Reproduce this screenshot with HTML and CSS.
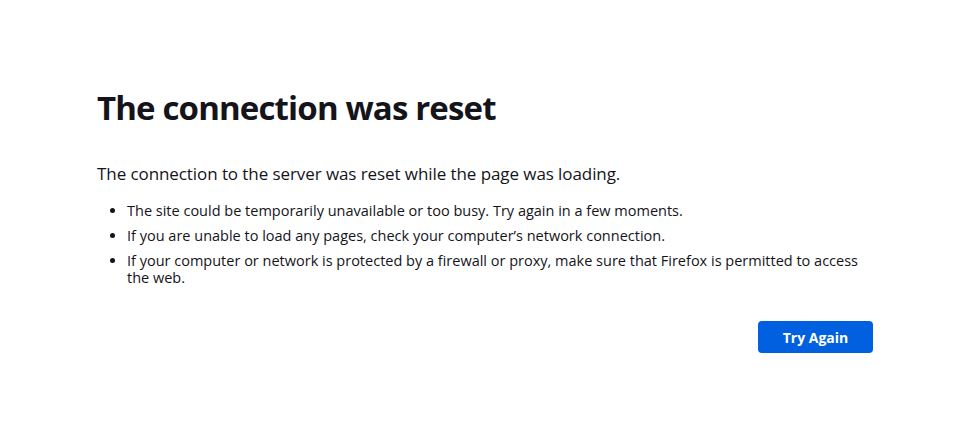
FILE: index.html
```html
<!DOCTYPE html>
<html lang="en">
<head>
<meta charset="utf-8">
<title>Problem loading page</title>
<link rel="stylesheet" href="styles.css">
</head>
<body>
<main class="container">
  <h1 class="title">The connection was reset</h1>
  <p class="desc">The connection to the server was reset while the page was loading.</p>
  <ul class="tips">
    <li>The site could be temporarily unavailable or too busy. Try again in a few moments.</li>
    <li>If you are unable to load any pages, check your computer’s network connection.</li>
    <li>If your computer or network is protected by a firewall or proxy, make sure that Firefox is permitted to access the web.</li>
  </ul>
  <div class="actions">
    <button class="btn">Try Again</button>
  </div>
</main>
</body>
</html>
```
FILE: styles.css
```css
html, body {
  margin: 0;
  padding: 0;
  background: #ffffff;
}
body {
  font-family: "Open Sans", "Noto Sans", sans-serif;
  color: #15141a;
}
.container {
  width: 776px;
  margin: 0 0 0 97px;
  padding-top: 86px;
}
.title {
  font-size: 33px;
  font-weight: 700;
  line-height: 44px;
  letter-spacing: -0.85px;
  margin: 0 0 32px 0;
}
.desc {
  font-size: 17px;
  line-height: 24px;
  letter-spacing: -0.08px;
  margin: 0 0 16px 0;
}
.tips {
  margin: 0;
  padding-left: 30px;
  font-size: 14.5px;
  line-height: 17px;
}
.tips li {
  margin-bottom: 8px;
}
.actions {
  display: flex;
  justify-content: flex-end;
  margin-top: 35px;
}
.btn {
  width: 115px;
  height: 32px;
  background: #0060df;
  color: #ffffff;
  border: none;
  border-radius: 4px;
  font-family: inherit;
  font-size: 14px;
  font-weight: 700;
  padding: 0;
}
```
